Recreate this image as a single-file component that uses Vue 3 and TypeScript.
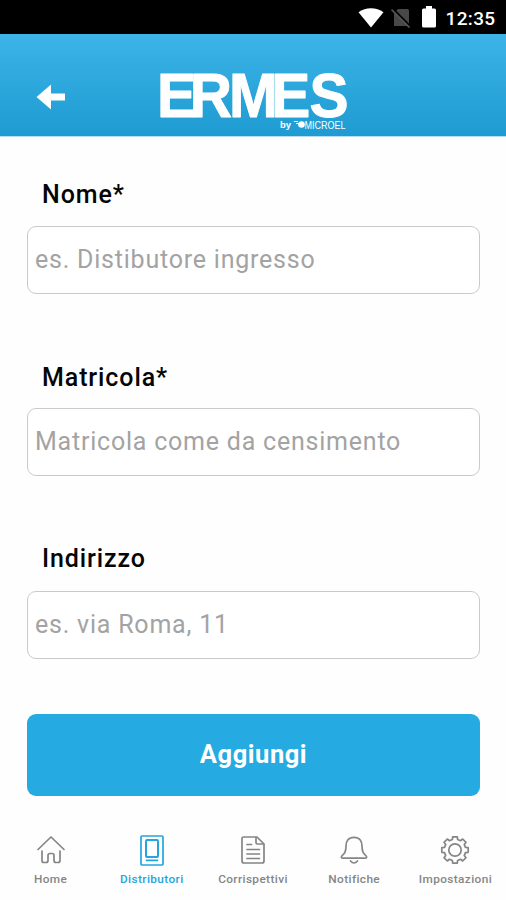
<script setup lang="ts">
import { ref } from 'vue'

interface Field {
  id: string
  label: string
  placeholder: string
}

interface Tab {
  id: string
  label: string
}

const fields: Field[] = [
  { id: 'nome', label: 'Nome*', placeholder: 'es. Distibutore ingresso' },
  { id: 'matricola', label: 'Matricola*', placeholder: 'Matricola come da censimento' },
  { id: 'indirizzo', label: 'Indirizzo', placeholder: 'es. via Roma, 11' },
]

const tabs: Tab[] = [
  { id: 'home', label: 'Home' },
  { id: 'distributori', label: 'Distributori' },
  { id: 'corrispettivi', label: 'Corrispettivi' },
  { id: 'notifiche', label: 'Notifiche' },
  { id: 'impostazioni', label: 'Impostazioni' },
]

const active = ref('distributori')
const values = ref<Record<string, string>>({ nome: '', matricola: '', indirizzo: '' })

// Outline of an eight-toothed gear centred in a 32x32 box.
function gearPath(): string {
  const points: string[] = []
  const corners: [number, number][] = [
    [-14, 10.8],
    [-10, 13.4],
    [10, 13.4],
    [14, 10.8],
  ]
  for (let tooth = 0; tooth < 8; tooth++) {
    for (const [offset, radius] of corners) {
      const a = ((tooth * 45 + offset) * Math.PI) / 180
      points.push(`${(16 + radius * Math.sin(a)).toFixed(2)} ${(16 - radius * Math.cos(a)).toFixed(2)}`)
    }
  }
  return `M${points.join('L')}Z`
}
const gear = gearPath()
</script>

<template>
  <div class="screen">
    <div class="status">
      <svg class="wifi" width="26" height="20" viewBox="0 0 26 20">
        <path d="M.5 4.2C7.5-1 18.500-1 25.500 4.200L13 19.500Z" fill="#fff" />
      </svg>
      <svg class="sim" width="20" height="20" viewBox="0 0 20 20">
        <path d="M7 1h9.500q1.500 0 1.500 1.500V18H3V5Z" fill="#484848" />
        <path d="M2.500 1.500L20 19" stroke="#000" stroke-width="2" />
        <path d="M.5 1.500L18.500 19.500" stroke="#555" stroke-width="1.700" />
      </svg>
      <svg class="battery" width="14" height="22" viewBox="0 0 14 22">
        <path d="M4 0h6v2.500h2.500q1.500 0 1.500 1.500v16q0 1.500-1.500 1.500h-11q-1.500 0-1.500-1.500V4q0-1.500 1.500-1.500H4Z" fill="#fff" />
      </svg>
      <span class="clock">12:35</span>
    </div>

    <header class="header">
      <button class="back" aria-label="Indietro">
        <svg width="30" height="26" viewBox="0 0 30 26">
          <path d="M.5 13L15 .5V9.500H29V16.500H15V25.500Z" fill="#fff" />
        </svg>
      </button>
      <svg class="logo" width="206" height="84" viewBox="-8 -16 206 84">
        <text class="brand" transform="scale(.93 1)" x="-3.200 32 74.200 119.500 160.700" y="49.300">ERMES</text>
        <text class="by" x="120" y="60">by</text>
        <circle cx="141.500" cy="56.500" r="3.300" fill="#fff" />
        <path d="M134 53.500h4M136 55.500h3" stroke="#fff" stroke-width="1.200" />
        <text class="maker" x="144.500" y="60.600" textLength="41" lengthAdjust="spacingAndGlyphs">MICROEL</text>
      </svg>
    </header>

    <form class="form" @submit.prevent>
      <div v-for="field in fields" :key="field.id" class="field">
        <label :for="field.id">{{ field.label }}</label>
        <input :id="field.id" v-model="values[field.id]" type="text" :placeholder="field.placeholder" />
      </div>
      <button class="submit" type="submit">Aggiungi</button>
    </form>

    <nav class="tabs">
      <button
        v-for="tab in tabs"
        :key="tab.id"
        class="tab"
        :class="{ active: tab.id === active }"
        @click="active = tab.id"
      >
        <svg width="32" height="32" viewBox="0 0 32 32">
          <template v-if="tab.id === 'home'">
            <path d="M3 15.500L16 3L29 15.500" />
            <path d="M7 17V26.500Q7 28.500 9 28.500H11Q13 28.500 13 26.500V21.500Q13 19.500 15 19.500H17Q19 19.500 19 21.500V26.500Q19 28.500 21 28.500H23Q25 28.500 25 26.500V17" />
          </template>
          <template v-else-if="tab.id === 'distributori'">
            <rect x="5" y="2" width="22" height="29" rx="1" />
            <rect x="10" y="6" width="12" height="17" rx="1" stroke-width="2" />
            <path d="M10.500 26.300H21.500" />
          </template>
          <template v-else-if="tab.id === 'corrispettivi'">
            <path d="M6.500 3H20L27 10V27Q27 29 25 29H7Q5 29 5 27V4.500Q5 3 6.500 3Z" />
            <path d="M19 3.500V8.500Q19 10 20.500 10H26.500M10 10.500H14.500M10 15.500H22.500M10 20H22.500M10 24.500H22.500" />
          </template>
          <template v-else-if="tab.id === 'notifiche'">
            <path d="M16 3.300C10.500 3.300 8 7 8 12C8 18 6.500 19.500 3.800 22Q2.500 24.200 5 24.200H27Q29.500 24.200 28.200 22C25.500 19.500 24 18 24 12C24 7 21.500 3.300 16 3.300Z" />
            <path d="M12.500 27Q16 31 19.500 27" />
          </template>
          <template v-else>
            <path :d="gear" />
            <circle cx="16" cy="16" r="6.200" />
          </template>
        </svg>
        <span>{{ tab.label }}</span>
      </button>
    </nav>
  </div>
</template>

<style>
body {
  margin: 0;
  background: #fff;
}
</style>

<style scoped>
.screen {
  width: 506px;
  height: 900px;
  display: flex;
  flex-direction: column;
  overflow: hidden;
  background: #fefefe;
  font-family: Roboto, "Liberation Sans", sans-serif;
}
button {
  border: 0;
  padding: 0;
  background: none;
  font-family: inherit;
  cursor: pointer;
}
.status {
  height: 34px;
  flex: none;
  box-sizing: border-box;
  padding-right: 10.5px;
  display: flex;
  align-items: center;
  justify-content: flex-end;
  background: #000;
  color: #fff;
}
.wifi,
.sim {
  margin-top: 2px;
}
.sim {
  margin-left: 7px;
}
.battery {
  margin-left: 11px;
}
.clock {
  margin-left: 10px;
  padding-top: 3px;
  font-size: 19px;
  line-height: 22px;
  font-weight: 500;
  letter-spacing: 0.35px;
}
.header {
  height: 102px;
  flex: none;
  display: grid;
  grid-template-columns: 152px 1fr;
  align-items: start;
  background: linear-gradient(#3cb4e7, #1e9bd2);
  border-bottom: 1px solid #b5dcf1;
}
.back {
  margin: 50px 0 0 36px;
  width: 30px;
  height: 26px;
}
.back svg {
  display: block;
}
.logo {
  margin-top: 18px;
}
.logo text {
  fill: #fff;
  font-family: "Liberation Sans", sans-serif;
  font-weight: 700;
}
.logo .brand {
  font-size: 63px;
  stroke: #fff;
  stroke-width: 1px;
  stroke-linejoin: round;
}
.logo .by {
  font-size: 9.5px;
}
.logo .maker {
  font-size: 10px;
  font-weight: 400;
}
.form {
  height: 659px;
  flex: none;
  box-sizing: border-box;
  padding: 42px 26px 0 27px;
  display: flex;
  flex-direction: column;
}
.field {
  height: 182.5px;
  flex: none;
  display: flex;
  flex-direction: column;
}
.field:nth-child(3) {
  height: 170px;
}
label {
  height: 46.8px;
  padding-left: 15px;
  line-height: 32px;
  font-size: 25px;
  font-weight: 500;
  letter-spacing: 0.9px;
  color: #050505;
}
.field:nth-child(3) label {
  line-height: 30px;
}
input {
  box-sizing: border-box;
  width: 453px;
  height: 68px;
  padding: 0 7px 1px;
  border: 1.5px solid #cacaca;
  border-radius: 9px;
  outline: 0;
  background: #fff;
  font-family: inherit;
  font-size: 25px;
  letter-spacing: 0.78px;
  color: #222;
}
input::placeholder {
  color: #a3a3a3;
  opacity: 1;
}
.submit {
  width: 453px;
  height: 82px;
  padding-bottom: 3px;
  border-radius: 9px;
  background: #25aae2;
  color: #fff;
  font-size: 25.5px;
  font-weight: 700;
  letter-spacing: 0.55px;
}
.tabs {
  flex: 1;
  display: grid;
  grid-template-columns: repeat(5, 1fr);
  align-items: start;
  padding-top: 38px;
}
.tab {
  display: flex;
  flex-direction: column;
  align-items: center;
  color: #858585;
}
.tab.active {
  color: #25a5dc;
}
.tab svg {
  fill: none;
  stroke: currentColor;
  stroke-width: 1.7;
  stroke-linecap: round;
  stroke-linejoin: round;
}
.tab span {
  margin-top: 5px;
  font-size: 11.8px;
  line-height: 16px;
  font-weight: 500;
  letter-spacing: 0.4px;
  white-space: nowrap;
}
</style>
